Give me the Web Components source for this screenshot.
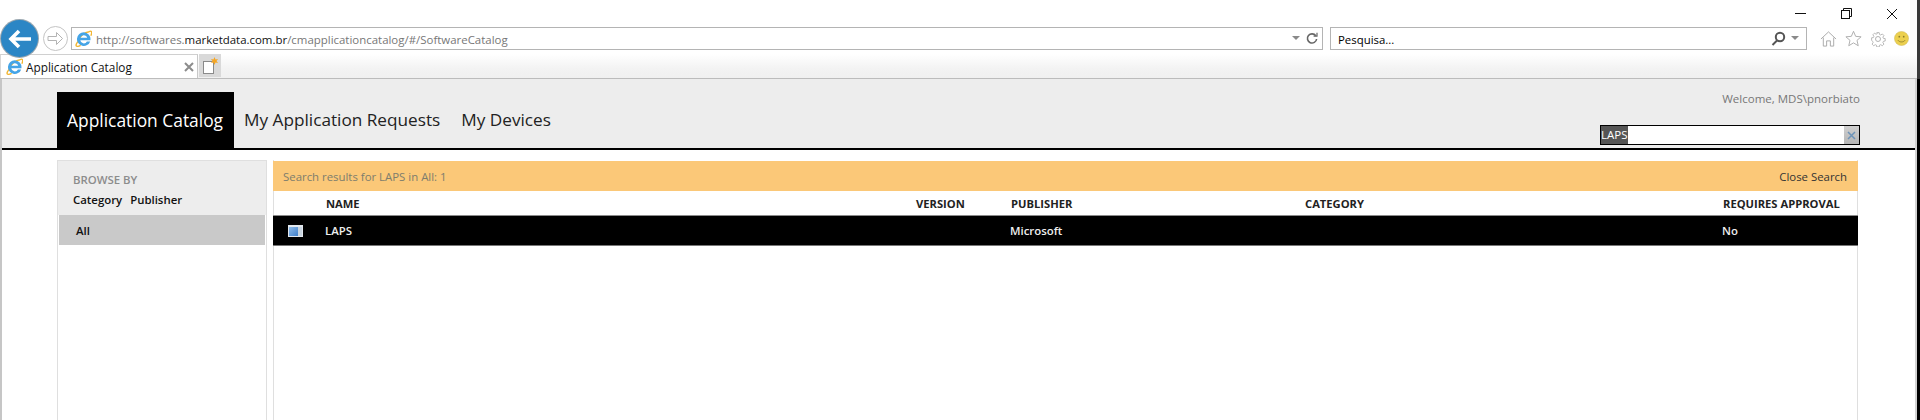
<!DOCTYPE html>
<html>
<head>
<meta charset="utf-8">
<title>Application Catalog</title>
<style>
  html, body { margin: 0; height: 420px; overflow: hidden; background: #000; }
  body { font-family: "Open Sans", "Liberation Sans", sans-serif; }
  #window { display: flex; flex-direction: column; height: 420px; }
  #page { display: flex; flex-direction: column; flex: 1; min-height: 0; margin-right: 3px; background: #fff; border-left: 2px solid #c6c6c6; border-right: 2px solid #d2d2d2; }
</style>
</head>
<body>
<div id="window">
  <ie-chrome url-host="softwares." url-strong="marketdata.com.br" url-path="/cmapplicationcatalog/#/SoftwareCatalog" tab-title="Application Catalog"></ie-chrome>
  <div id="page">
    <catalog-header user="Welcome, MDS\pnorbiato" query="LAPS"></catalog-header>
    <catalog-body></catalog-body>
  </div>
</div>

<script>
const IE_LOGO = `
  <svg class="logo" viewBox="0 0 18 18" width="17" height="17">
    <path d="M2.800 12.500C-.5 17 1.500 18.500 6 16.200M15 1.800C17.500 .2 18.500 2 16.800 6M2.800 12.500C5 6.500 10 2.200 15 1.800" fill="none" stroke="#f2b632" stroke-width="1.500"/>
    <path d="M9.300 2.500a7.200 7.200 0 1 0 6.800 9.600h-3.500a3.700 3.700 0 0 1-7-1.200h10.700A7.200 7.200 0 0 0 9.300 2.500zM5.700 8.300a3.700 3.700 0 0 1 7.200 0z" fill="#45a4e6" fill-rule="evenodd"/>
  </svg>`;

const chromeTemplate = document.createElement('template');
chromeTemplate.innerHTML = `
  <style>
    :host { display: block; height: 79px; position: relative; background: #fff; font-size: 11.400px; color: #000; flex: none; border-right: 3px solid #3a3a3a; }
    .caption { display: flex; justify-content: flex-end; height: 27px; padding-right: 2px; box-sizing: border-box; }
    .caption span { width: 46px; height: 27px; display: flex; align-items: center; justify-content: center; }
    .nav { display: flex; align-items: center; height: 23px; }
    .back { position: absolute; left: 1px; top: 20px; width: 37px; height: 37px; border-radius: 50%; background: #2b86c5; box-shadow: 0 0 0 1px #9aa7b0; display: flex; align-items: center; justify-content: center; z-index: 2; }
    .forward { width: 25px; height: 25px; border: 1px solid #c4c4c4; border-radius: 50%; box-sizing: border-box; margin-left: 43px; display: flex; align-items: center; justify-content: center; flex: none; }
    .field { height: 23px; box-sizing: border-box; border: 1px solid #b4b4b4; display: flex; align-items: center; }
    .address { margin-left: 3px; width: 1252px; padding-left: 3px; color: #777; flex: none; font-size: 11.450px; }
    .address .logo { margin-right: 4px; flex: none; display: block; }
    .address b { font-weight: 400; color: #111; }
    .url { flex: 1; white-space: nowrap; padding-top: 1px; }
    .search { margin-left: 7px; width: 477px; padding-left: 7px; flex: none; }
    .search .text { flex: 1; padding-top: 1px; }
    .tools { display: flex; align-items: center; gap: 8px; margin-left: 13px; }
    .tabs { display: flex; align-items: stretch; height: 24px; margin-top: 4px; background: linear-gradient(#fff, #f3f3f3 60%, #f0f0f0); border-bottom: 1px solid #bcbcbc; }
    .tab { width: 198px; box-sizing: border-box; background: #fff; border-top: 1px solid #d0d0d0; border-right: 1px solid #c8c8c8; border-left: 1px solid #d8d8d8; padding-left: 5px; display: flex; align-items: center; gap: 3px; font-size: 11.800px; color: #111; }
    .tab .logo { flex: none; }
    .tab .title { flex: 1; }
    .tab .x { margin-right: 3px; }
    .new { width: 22px; height: 23px; margin-left: 1px; background: #d9d9d9; display: flex; align-items: center; justify-content: center; }
  </style>
  <div class="caption">
    <span><svg width="11" height="2"><rect width="11" height="1" fill="#111"/></svg></span>
    <span><svg width="11" height="11" viewBox="0 0 11 11" fill="none" stroke="#111"><rect x=".5" y="2.500" width="8" height="8"/><path d="M2.500 2.500v-2h8v8h-2"/></svg></span>
    <span><svg width="12" height="12" viewBox="0 0 12 12" stroke="#111" fill="none"><path d="M1 1l10 10M11 1L1 11"/></svg></span>
  </div>
  <div class="nav">
    <div class="back"><svg width="24" height="20" viewBox="0 0 24 20" fill="none" stroke="#fff" stroke-width="3.600"><path d="M23 10H3M11 2l-8 8 8 8"/></svg></div>
    <div class="forward"><svg width="17" height="15" viewBox="0 0 17 15" fill="none" stroke="#b4b4b4"><path d="M1 5.500h8.500V1.500l6 6-6 6V9.500H1z"/></svg></div>
    <div class="field address">
      ${IE_LOGO}
      <span class="url" id="url"></span>
      <svg width="8" height="5" viewBox="0 0 8 5" style="margin-right:6px"><path d="M0 0h8L4 4z" fill="#8a8a8a"/></svg>
      <svg width="12" height="13" viewBox="0 0 12 13" fill="none" stroke="#666" stroke-width="1.600" style="margin-right:4px"><path d="M9.800 3.800A4.600 4.600 0 1 0 10.600 7"/><path d="M7.600 4.200h3.400V.8" stroke-width="1.200"/></svg>
    </div>
    <div class="field search">
      <span class="text">Pesquisa...</span>
      <svg width="15" height="15" viewBox="0 0 15 15" fill="none" stroke="#555" stroke-width="2" style="margin-right:5px"><circle cx="9" cy="6" r="4.200"/><path d="M6 9.500L1.500 14"/></svg>
      <svg width="8" height="5" viewBox="0 0 8 5" style="margin-right:7px"><path d="M0 0h8L4 4z" fill="#8a8a8a"/></svg>
    </div>
    <div class="tools">
      <svg width="17" height="18" viewBox="0 0 18 18" fill="#fff" stroke="#a8a8a8"><path d="M1 9l8-7.500L17 9M3.500 7.500V16.500h3.500V11h4v5.500h3.500V7.500"/></svg>
      <svg width="17" height="17" viewBox="0 0 19 18" fill="#fff" stroke="#a8a8a8"><path d="M9.500 1l2.400 5.600 6.100.5-4.600 4 1.400 6-5.300-3.200-5.300 3.200 1.400-6-4.600-4 6.100-.5z"/></svg>
      <svg width="16" height="16" viewBox="0 0 18 18" fill="none" stroke="#a8a8a8"><circle cx="9" cy="9" r="2.800"/><path d="M7.500 1h3l.4 2.300 1.500.7 2-1.300 2 2-1.300 2 .7 1.500 2.200.3v3l-2.200.4-.7 1.500 1.300 2-2 2-2-1.300-1.500.7-.4 2.200h-3l-.4-2.200-1.500-.7-2 1.300-2-2 1.300-2-.7-1.500L1 10.500v-3l2.200-.3.7-1.500-1.300-2 2-2 2 1.300 1.500-.7z" transform="translate(.9 .9) scale(.9)"/></svg>
      <svg width="15" height="15" viewBox="0 0 17 17"><circle cx="8.500" cy="8.500" r="8" fill="#ecd04f" stroke="#c9b04a" stroke-width=".5"/><circle cx="6" cy="6.500" r="1" fill="#8d7d2a"/><circle cx="11" cy="6.500" r="1" fill="#8d7d2a"/><path d="M4.500 10.500c1.500 2.500 6.500 2.500 8 0" fill="none" stroke="#8d7d2a"/></svg>
    </div>
  </div>
  <div class="tabs">
    <div class="tab">
      ${IE_LOGO}
      <span class="title" id="title"></span>
      <svg class="x" width="10" height="10" viewBox="0 0 10 10" stroke="#8c8c8c" stroke-width="2"><path d="M1 1l8 8M9 1L1 9"/></svg>
    </div>
    <div class="new">
      <svg width="18" height="18" viewBox="0 0 18 18"><rect x="2.500" y="4.500" width="10" height="12" fill="#fff" stroke="#8a8a8a"/><path d="M13.500 0l1 2.500 2.500-.5-1.500 2 1.500 2-2.500-.5-1 2.500-1-2.500-2.500.5 1.500-2-1.500-2 2.500.5z" fill="#f5a623"/></svg>
    </div>
  </div>
`;

class IeChrome extends HTMLElement {
  constructor () {
    super();
    this.attachShadow({mode: 'open'});
    this.shadowRoot.appendChild(chromeTemplate.content.cloneNode(true));
  }
  connectedCallback () {
    const url = this.shadowRoot.querySelector('#url');
    url.innerHTML = 'http://' + this.getAttribute('url-host') + '<b>' + this.getAttribute('url-strong') + '</b>' + this.getAttribute('url-path');
    this.shadowRoot.querySelector('#title').textContent = this.getAttribute('tab-title');
  }
}
customElements.define('ie-chrome', IeChrome);

const headerTemplate = document.createElement('template');
headerTemplate.innerHTML = `
  <style>
    :host { display: flex; align-items: flex-end; height: 71px; flex: none; box-sizing: border-box; padding: 0 55px; background: #ededed; border-bottom: 2px solid #000; }
    nav { display: flex; flex: 1; height: 56px; }
    nav a { display: flex; align-items: center; padding: 0 10px 1px 10px; font-size: 17.200px; color: #222; white-space: nowrap; box-sizing: border-box; }
    nav a.current { background: #000; color: #fff; font-size: 17.400px; padding-right: 11px; }
    nav a + a + a { padding-left: 11px; }
    .side { display: flex; flex-direction: column; align-items: flex-end; align-self: stretch; justify-content: space-between; padding: 12px 0 3px; box-sizing: border-box; }
    .user { font-size: 11.500px; color: #777; }
    .box { width: 260px; height: 20px; box-sizing: border-box; border: 1px solid #000; background: #fff; display: flex; align-items: stretch; justify-content: space-between; font-size: 11.500px; }
    .sel { background: #555; color: #fff; line-height: 18px; }
    .clear { width: 15px; background: linear-gradient(#cfcfcf, #b5b5b5); display: flex; align-items: center; justify-content: center; }
  </style>
  <nav>
    <a class="current">Application Catalog</a>
    <a>My Application Requests</a>
    <a>My Devices</a>
  </nav>
  <div class="side">
    <div class="user"></div>
    <div class="box"><span class="sel"></span><span class="clear"><svg width="9" height="9" viewBox="0 0 9 9" stroke="#6d93b8" stroke-width="1.500"><path d="M1 1l7 7M8 1L1 8"/></svg></span></div>
  </div>
`;

class CatalogHeader extends HTMLElement {
  constructor () {
    super();
    this.attachShadow({mode: 'open'});
    this.shadowRoot.appendChild(headerTemplate.content.cloneNode(true));
  }
  connectedCallback () {
    this.shadowRoot.querySelector('.user').textContent = this.getAttribute('user');
    this.shadowRoot.querySelector('.sel').textContent = this.getAttribute('query');
  }
}
customElements.define('catalog-header', CatalogHeader);

const bodyTemplate = document.createElement('template');
bodyTemplate.innerHTML = `
  <style>
    :host { display: flex; flex: 1; gap: 6px; padding: 10px 57px 0 55px; min-height: 0; font-size: 11.400px; }
    aside { width: 210px; box-sizing: border-box; border: 1px solid #dfdfdf; border-bottom: 0; padding: 0 1px; flex: none; }
    .browse { background: #ededed; margin: 0 -1px; padding: 11px 15px 0; height: 54px; box-sizing: border-box; }
    .browse h4 { margin: 0 0 5px; font-size: 11.400px; font-weight: 600; color: #8c8c8c; text-transform: uppercase; }
    .browse div { display: flex; gap: 8px; font-weight: 600; color: #111; }
    .all { background: #c9c9c9; height: 30px; display: flex; align-items: center; padding-left: 17px; font-weight: 600; color: #111; }
    main { flex: 1; min-width: 0; box-sizing: border-box; border-right: 1px solid #dfdfdf; border-left: 1px solid #dfdfdf; }
    .banner { height: 30px; background: #fbc878; display: flex; align-items: center; justify-content: space-between; padding: 0 11px 0 10px; margin: 1px -1px 0; color: #7d7d6d; }
    .banner span:last-child { color: #333; }
    .row { display: grid; grid-template-columns: 52px 590px 95px 294px 418px 1fr; align-items: center; }
    .row.head { height: 25px; box-sizing: border-box; border-bottom: 1px solid #8a8a8a; margin: 0 -1px; padding-left: 1px; font-weight: 700; color: #222; font-size: 11.200px; }
    .row.item { height: 30px; box-sizing: border-box; border-bottom: 1px solid #777; background: #000; color: #eee; font-weight: 600; margin: 0 -1px; }
    .icon { padding-left: 15px; display: flex; }
  </style>
  <aside>
    <div class="browse">
      <h4>Browse by</h4>
      <div><span>Category</span><span>Publisher</span></div>
    </div>
    <div class="all">All</div>
  </aside>
  <main>
    <div class="banner"><span>Search results for LAPS in All: 1</span><span>Close Search</span></div>
    <div class="row head"><span></span><span>NAME</span><span>VERSION</span><span>PUBLISHER</span><span>CATEGORY</span><span>REQUIRES APPROVAL</span></div>
    <div class="row item">
      <span class="icon"><svg width="15" height="12" viewBox="0 0 15 12"><defs><linearGradient id="app" x1="0" x2="1" y1="0" y2="1"><stop offset="0" stop-color="#8fbbe8"/><stop offset="1" stop-color="#3f7fcb"/></linearGradient></defs><rect width="15" height="12" fill="#e3e8ee"/><rect x="1" y="2" width="9" height="9" fill="url(#app)"/><rect x="10" y="2" width="4" height="9" fill="#c9d5e0"/></svg></span>
      <span>LAPS</span><span></span><span>Microsoft</span><span></span><span>No</span>
    </div>
  </main>
`;

class CatalogBody extends HTMLElement {
  constructor () {
    super();
    this.attachShadow({mode: 'open'});
    this.shadowRoot.appendChild(bodyTemplate.content.cloneNode(true));
  }
}
customElements.define('catalog-body', CatalogBody);
</script>
</body>
</html>
